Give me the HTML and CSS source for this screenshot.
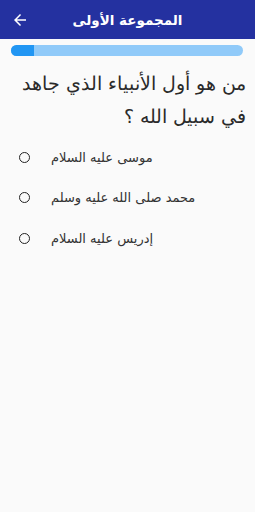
FILE: index.html
```html
<!DOCTYPE html>
<html lang="ar">
<head>
    <meta charset="UTF-8">
    <title>المجموعة الأولى</title>
    <link rel="stylesheet" href="styles.css">
</head>
<body>
<div class="app-bar">
    <svg class="back" width="18" height="18" viewBox="0 0 24 24"><path d="M20 11H7.83l5.59-5.59L12 4l-8 8 8 8 1.41-1.41L7.83 13H20v-2z" fill="#fff"/></svg>
    <div class="title">المجموعة الأولى</div>
</div>
<div class="progress"><div class="progress-fill" style="width:10%"></div></div>
<div class="question">من هو أول الأنبياء الذي جاهد في سبيل الله ؟</div>
<div class="options">
    <div class="option"><span class="radio"></span><span class="label">موسى عليه السلام</span></div>
    <div class="option"><span class="radio"></span><span class="label">محمد صلى الله عليه وسلم</span></div>
    <div class="option"><span class="radio"></span><span class="label">إدريس عليه السلام</span></div>
</div>
</body>
</html>
```
FILE: styles.css
```css
body {
    margin: 0;
    background: #fafafa;
    font-family: "DejaVu Sans", "Noto Sans", sans-serif;
    width: 255px;
    height: 512px;
}

.app-bar {
    height: 39px;
    background: #2431a0;
    display: flex;
    align-items: center;
    color: #fff;
}

.back {
    margin-left: 11px;
}

.title {
    flex: 1;
    text-align: center;
    font-size: 13.5px;
    font-weight: bold;
    margin-right: 29px;
}

.progress {
    margin: 6px 12px 0 11px;
    height: 11px;
    border-radius: 6px;
    background: #90caf9;
    overflow: hidden;
}

.progress-fill {
    height: 100%;
    background: #2196f3;
}

.question {
    direction: rtl;
    font-size: 19px;
    line-height: 33px;
    color: #2a2a2a;
    padding: 11px 9px 0 20px;
    font-weight: 300;
}

.options {
    padding-top: 4px;
}

.option {
    display: flex;
    align-items: center;
    height: 40.5px;
    padding-left: 19px;
}

.radio {
    width: 9px;
    height: 9px;
    border: 1.7px solid #222;
    border-radius: 50%;
    margin-right: 21px;
}

.label {
    font-size: 13px;
    color: #333;
}
```
